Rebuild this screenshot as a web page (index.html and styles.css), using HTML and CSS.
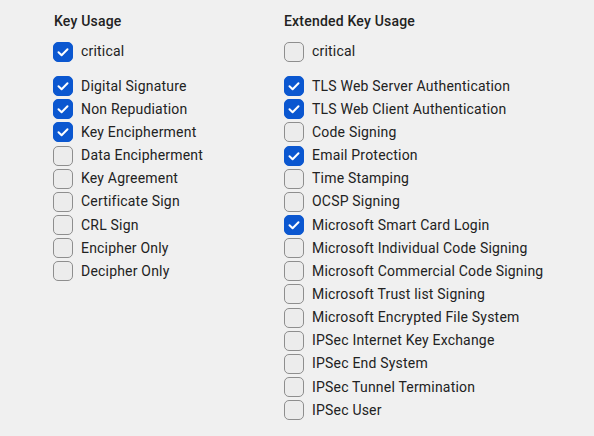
FILE: index.html
```html
<!DOCTYPE html>
<html>
<head>
<meta charset="utf-8">
<link rel="stylesheet" href="styles.css">
</head>
<body>
<div class="page">
  <section class="col col-left">
    <h3 class="title">Key Usage</h3>
    <label class="row crit"><span class="box on"><svg viewBox="0 0 20 20"><polyline points="5.5,10.2 8.6,13.2 14.5,7.2"/></svg></span>critical</label>
    <div class="list">
      <label class="row"><span class="box on"><svg viewBox="0 0 20 20"><polyline points="5.5,10.2 8.6,13.2 14.5,7.2"/></svg></span>Digital Signature</label>
      <label class="row"><span class="box on"><svg viewBox="0 0 20 20"><polyline points="5.5,10.2 8.6,13.2 14.5,7.2"/></svg></span>Non Repudiation</label>
      <label class="row"><span class="box on"><svg viewBox="0 0 20 20"><polyline points="5.5,10.2 8.6,13.2 14.5,7.2"/></svg></span>Key Encipherment</label>
      <label class="row"><span class="box"></span>Data Encipherment</label>
      <label class="row"><span class="box"></span>Key Agreement</label>
      <label class="row"><span class="box"></span>Certificate Sign</label>
      <label class="row"><span class="box"></span>CRL Sign</label>
      <label class="row"><span class="box"></span>Encipher Only</label>
      <label class="row"><span class="box"></span>Decipher Only</label>
    </div>
  </section>
  <section class="col">
    <h3 class="title">Extended Key Usage</h3>
    <label class="row crit"><span class="box"></span>critical</label>
    <div class="list">
      <label class="row"><span class="box on"><svg viewBox="0 0 20 20"><polyline points="5.5,10.2 8.6,13.2 14.5,7.2"/></svg></span>TLS Web Server Authentication</label>
      <label class="row"><span class="box on"><svg viewBox="0 0 20 20"><polyline points="5.5,10.2 8.6,13.2 14.5,7.2"/></svg></span>TLS Web Client Authentication</label>
      <label class="row"><span class="box"></span>Code Signing</label>
      <label class="row"><span class="box on"><svg viewBox="0 0 20 20"><polyline points="5.5,10.2 8.6,13.2 14.5,7.2"/></svg></span>Email Protection</label>
      <label class="row"><span class="box"></span>Time Stamping</label>
      <label class="row"><span class="box"></span>OCSP Signing</label>
      <label class="row"><span class="box on"><svg viewBox="0 0 20 20"><polyline points="5.5,10.2 8.6,13.2 14.5,7.2"/></svg></span>Microsoft Smart Card Login</label>
      <label class="row"><span class="box"></span>Microsoft Individual Code Signing</label>
      <label class="row"><span class="box"></span>Microsoft Commercial Code Signing</label>
      <label class="row"><span class="box"></span>Microsoft Trust list Signing</label>
      <label class="row"><span class="box"></span>Microsoft Encrypted File System</label>
      <label class="row"><span class="box"></span>IPSec Internet Key Exchange</label>
      <label class="row"><span class="box"></span>IPSec End System</label>
      <label class="row"><span class="box"></span>IPSec Tunnel Termination</label>
      <label class="row"><span class="box"></span>IPSec User</label>
    </div>
  </section>
</div>
</body>
</html>
```

FILE: styles.css
```css
* { box-sizing: border-box; }
html, body {
  margin: 0;
  padding: 0;
  background: #f0f0f0;
}
body {
  font-family: Roboto, "Liberation Sans", sans-serif;
  font-size: 14px;
  letter-spacing: 0.2px;
  color: #222222;
  width: 594px;
  height: 436px;
  overflow: hidden;
}
.page {
  display: flex;
  padding: 11px 0 0 53px;
}
.col {
  display: flex;
  flex-direction: column;
}
.col-left {
  width: 231px;
}
.title {
  margin: 0 0 9px 0;
  font-size: 14px;
  font-weight: 500;
  line-height: 20px;
  color: #222222;
}
.col-left .title {
  margin-left: 1px;
}
.row {
  display: flex;
  align-items: center;
  gap: 8px;
  height: 23px;
  line-height: 23px;
  white-space: nowrap;
}
.crit {
  margin-bottom: 11.5px;
}
.list {
  display: flex;
  flex-direction: column;
}
.list .row {
  height: 23.17px;
}
.box {
  width: 20px;
  height: 20px;
  flex: none;
  border-radius: 5px;
  border: 1.3px solid #8e8e8e;
  background: #ececec;
  display: flex;
  align-items: center;
  justify-content: center;
}
.box.on {
  background: #0b57d0;
  border-color: #0b57d0;
}
.box svg {
  width: 20px;
  height: 20px;
  flex: none;
}
.box polyline {
  fill: none;
  stroke: #ffffff;
  stroke-width: 2;
  stroke-linecap: round;
  stroke-linejoin: round;
}
```
